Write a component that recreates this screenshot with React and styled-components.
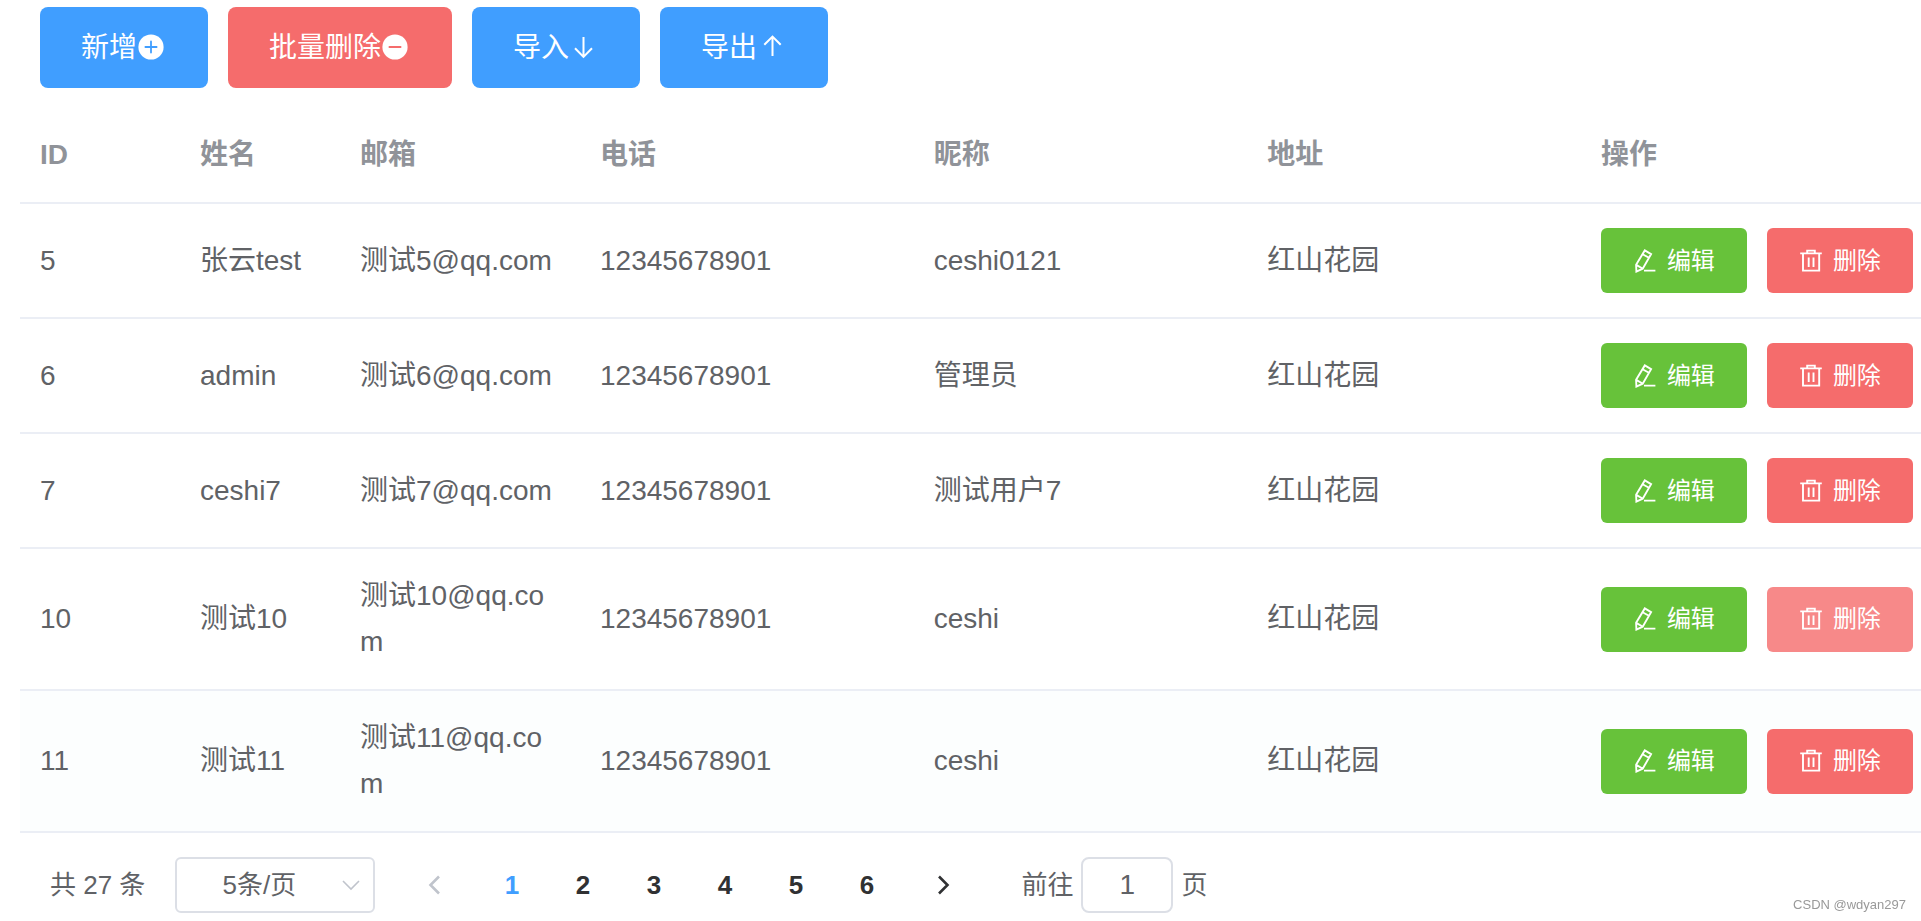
import { useState } from 'react'
import styled, { createGlobalStyle } from 'styled-components'

const GlobalStyle = createGlobalStyle`
  * {
    box-sizing: border-box;
  }

  body {
    margin: 0;
    background-color: #fff;
    color: #606266;
    font-family: "Liberation Sans", "Noto Sans CJK SC", sans-serif;
    font-size: 28px;
  }

  button, input, select {
    font-family: inherit;
  }
`;

const colors = {
  primary: '#409eff',
  success: '#67c23a',
  danger: '#f56c6c',
  dangerHover: '#f78989',
};

const Page = styled.main`
  padding: 7px 0 8px 20px;
  overflow-x: hidden;
`;

const Toolbar = styled.div`
  display: flex;
  gap: 20px;
  padding: 0 20px 20px;
`;

const ToolButton = styled.button`
  display: flex;
  align-items: center;
  height: 81px;
  padding: 0 43px 0 41px;
  border: 0;
  border-radius: 8px;
  background-color: ${({ $type }) => colors[$type]};
  color: #fff;
  font-size: 28px;
  line-height: 28px;
  cursor: pointer;
`;

const Icon = styled.svg`
  width: ${({ $size }) => $size}px;
  height: ${({ $size }) => $size}px;
  flex: none;
  fill: none;
  stroke: currentColor;
  stroke-width: ${({ $stroke }) => $stroke || 2};
`;

const Table = styled.table`
  width: 100%;
  table-layout: fixed;
  border-collapse: separate;
  border-spacing: 0;
`;

const Col = styled.col`
  width: ${({ $width }) => $width};
`;

const HeadCell = styled.th`
  padding: 24px 20px;
  border-bottom: 2px solid #ebeef5;
  color: #909399;
  font-weight: 700;
  line-height: 46px;
  text-align: left;
`;

const Row = styled.tr`
  background-color: ${({ $shaded }) => ($shaded ? '#fcfefe' : '#fff')};
`;

const Cell = styled.td`
  padding: 24px 20px;
  border-bottom: 2px solid #ebeef5;
  line-height: 46px;
  word-break: break-all;
`;

const Actions = styled.div`
  display: flex;
  gap: 20px;
`;

const RowButton = styled.button`
  display: flex;
  flex: none;
  align-items: center;
  gap: 10px;
  height: 65px;
  padding: 0 32px;
  border: 0;
  border-radius: 6px;
  background-color: ${({ $type }) => colors[$type]};
  color: #fff;
  font-size: 24px;
  line-height: 24px;
  white-space: nowrap;
  cursor: pointer;
`;

const Pagination = styled.nav`
  display: flex;
  align-items: center;
  padding: 24px 30px 0;
  font-size: 26px;
  line-height: 56px;
  white-space: nowrap;
`;

const SizeBox = styled.div`
  position: relative;
  display: flex;
  width: 200px;
  margin: 0 22px 0 30px;
`;

const SizeSelect = styled.select`
  width: 100%;
  height: 56px;
  padding: 0 48px 0 16px;
  border: 2px solid #dcdfe6;
  border-radius: 6px;
  appearance: none;
  background-color: #fff;
  color: #606266;
  font-size: 26px;
  text-align: center;
  text-align-last: center;
`;

const SelectArrow = styled.span`
  position: absolute;
  top: 0;
  right: 10px;
  display: flex;
  align-items: center;
  height: 100%;
  color: #c0c4cc;
  pointer-events: none;
`;

const PageButton = styled.button`
  display: flex;
  align-items: center;
  justify-content: center;
  width: 71px;
  height: 56px;
  padding: 0;
  border: 0;
  background: none;
  color: ${({ $active }) => ($active ? '#409eff' : '#303133')};
  font-size: 26px;
  font-weight: 700;
  cursor: pointer;

  &:disabled {
    color: #c0c4cc;
  }
`;

const ArrowButton = styled(PageButton)`
  width: 76px;
`;

const Pages = styled.div`
  display: flex;
  padding: 0 3px;
`;

const Jump = styled.label`
  display: flex;
  align-items: center;
  gap: 8px;
  margin-left: 40px;
`;

const JumpInput = styled.input`
  width: 92px;
  height: 56px;
  padding: 0 6px;
  border: 2px solid #dcdfe6;
  border-radius: 8px;
  color: #606266;
  font-size: 28px;
  text-align: center;
`;

const Watermark = styled.span`
  position: fixed;
  right: 15px;
  bottom: 6px;
  color: #999;
  font-size: 13px;
  line-height: 20px;
`;

function CirclePlusIcon() {
  return (
    <Icon $size={28} viewBox="0 0 28 28" aria-hidden="true">
      <circle cx="14" cy="13" r="12.6" fill="currentColor" stroke="none" />
      <path d="M14 7.4v11.2M8.4 13h11.2" stroke="#409eff" strokeWidth="1.8" strokeLinecap="round" />
    </Icon>
  )
}

function CircleMinusIcon() {
  return (
    <Icon $size={28} viewBox="0 0 28 28" aria-hidden="true">
      <circle cx="14" cy="13" r="12.6" fill="currentColor" stroke="none" />
      <path d="M8.4 13h11.2" stroke="#f56c6c" strokeWidth="1.8" strokeLinecap="round" />
    </Icon>
  )
}

function BottomIcon() {
  return (
    <Icon $size={28} viewBox="0 0 28 28" aria-hidden="true">
      <path d="M14.5 3v20M6 14.3l8.5 8.6 8.5-8.6" />
    </Icon>
  )
}

function TopIcon() {
  return (
    <Icon $size={28} viewBox="0 0 28 28" aria-hidden="true">
      <path d="M15.5 22V2.6M7.3 10.8l8.2-8.2 8.2 8.2" />
    </Icon>
  )
}

function EditIcon() {
  return (
    <Icon $size={24} $stroke={1.9} viewBox="0 0 24 24" aria-hidden="true">
      <path d="M11.8 1.4l6.3 3.7-8.4 14.6-6.3 2.9-.3-6.9zM9.6 5.2l6.3 3.6M3.2 15.9l6.3 3.6M11 21.6h11.4" />
    </Icon>
  )
}

function DeleteIcon() {
  return (
    <Icon $size={24} $stroke={1.9} viewBox="0 0 24 24" aria-hidden="true">
      <path d="M1.2 4.4h21.6M4 4.4v17.2h16.2V4.4M8.2 4.4V1.6h7.6v2.8M9.7 8.4v9.6M14.5 8.4v9.6" />
    </Icon>
  )
}

const columns = [
  { title: 'ID', width: '160px' },
  { title: '姓名', width: '160px' },
  { title: '邮箱', width: '240px' },
  { title: '电话', width: '17.55%' },
  { title: '昵称', width: '17.55%' },
  { title: '地址', width: '17.55%' },
  { title: '操作', width: 'auto' },
];

const users = [
  { id: 5, name: '张云test', email: '测试5@qq.com', phone: '12345678901', nickname: 'ceshi0121', address: '红山花园' },
  { id: 6, name: 'admin', email: '测试6@qq.com', phone: '12345678901', nickname: '管理员', address: '红山花园' },
  { id: 7, name: 'ceshi7', email: '测试7@qq.com', phone: '12345678901', nickname: '测试用户7', address: '红山花园' },
  { id: 10, name: '测试10', email: '测试10@qq.com', phone: '12345678901', nickname: 'ceshi', address: '红山花园', hovered: true },
  { id: 11, name: '测试11', email: '测试11@qq.com', phone: '12345678901', nickname: 'ceshi', address: '红山花园', shaded: true },
];

const pages = [1, 2, 3, 4, 5, 6];

function UserTable() {
  return (
    <Table>
      <colgroup>
        {columns.map((column) => <Col key={column.title} $width={column.width} />)}
      </colgroup>
      <thead>
        <tr>
          {columns.map((column) => (
            <HeadCell key={column.title} scope="col">{column.title}</HeadCell>
          ))}
        </tr>
      </thead>
      <tbody>
        {users.map((user) => (
          <Row key={user.id} $shaded={user.shaded}>
            <Cell>{user.id}</Cell>
            <Cell>{user.name}</Cell>
            <Cell>{user.email}</Cell>
            <Cell>{user.phone}</Cell>
            <Cell>{user.nickname}</Cell>
            <Cell>{user.address}</Cell>
            <Cell>
              <Actions>
                <RowButton type="button" $type="success"><EditIcon />编辑</RowButton>
                <RowButton type="button" $type={user.hovered ? 'dangerHover' : 'danger'}>
                  <DeleteIcon />删除
                </RowButton>
              </Actions>
            </Cell>
          </Row>
        ))}
      </tbody>
    </Table>
  )
}

function App() {
  const [current, setCurrent] = useState(1);
  const [jump, setJump] = useState('1');

  const goTo = (page) => {
    setCurrent(page);
    setJump(String(page));
  }

  return (
    <>
      <GlobalStyle />
      <Page>
        <Toolbar>
          <ToolButton type="button" $type="primary">新增<CirclePlusIcon /></ToolButton>
          <ToolButton type="button" $type="danger">批量删除<CircleMinusIcon /></ToolButton>
          <ToolButton type="button" $type="primary">导入<BottomIcon /></ToolButton>
          <ToolButton type="button" $type="primary">导出<TopIcon /></ToolButton>
        </Toolbar>
        <UserTable />
        <Pagination aria-label="分页">
          <span>共 27 条</span>
          <SizeBox>
            <SizeSelect aria-label="每页条数" defaultValue="5">
              <option value="5">5条/页</option>
              <option value="10">10条/页</option>
              <option value="20">20条/页</option>
            </SizeSelect>
            <SelectArrow>
              <Icon $size={28} $stroke={1.6} viewBox="0 0 28 28" aria-hidden="true">
                <path d="M6 10l8 8 8-8" />
              </Icon>
            </SelectArrow>
          </SizeBox>
          <ArrowButton type="button" aria-label="上一页" disabled={current === 1} onClick={() => goTo(current - 1)}>
            <Icon $size={24} $stroke={2.6} viewBox="0 0 24 24" aria-hidden="true">
              <path d="M16 3.5L7.5 12l8.5 8.5" />
            </Icon>
          </ArrowButton>
          <Pages>
            {pages.map((page) => (
              <PageButton key={page} type="button" $active={page === current} onClick={() => goTo(page)}>
                {page}
              </PageButton>
            ))}
          </Pages>
          <ArrowButton type="button" aria-label="下一页" disabled={current === 6} onClick={() => goTo(current + 1)}>
            <Icon $size={24} $stroke={2.6} viewBox="0 0 24 24" aria-hidden="true">
              <path d="M8 3.5l8.5 8.5L8 20.5" />
            </Icon>
          </ArrowButton>
          <Jump>
            前往
            <JumpInput value={jump} onChange={(e) => setJump(e.target.value)} />
            页
          </Jump>
        </Pagination>
      </Page>
      <Watermark>CSDN @wdyan297</Watermark>
    </>
  )
}

export default App;
